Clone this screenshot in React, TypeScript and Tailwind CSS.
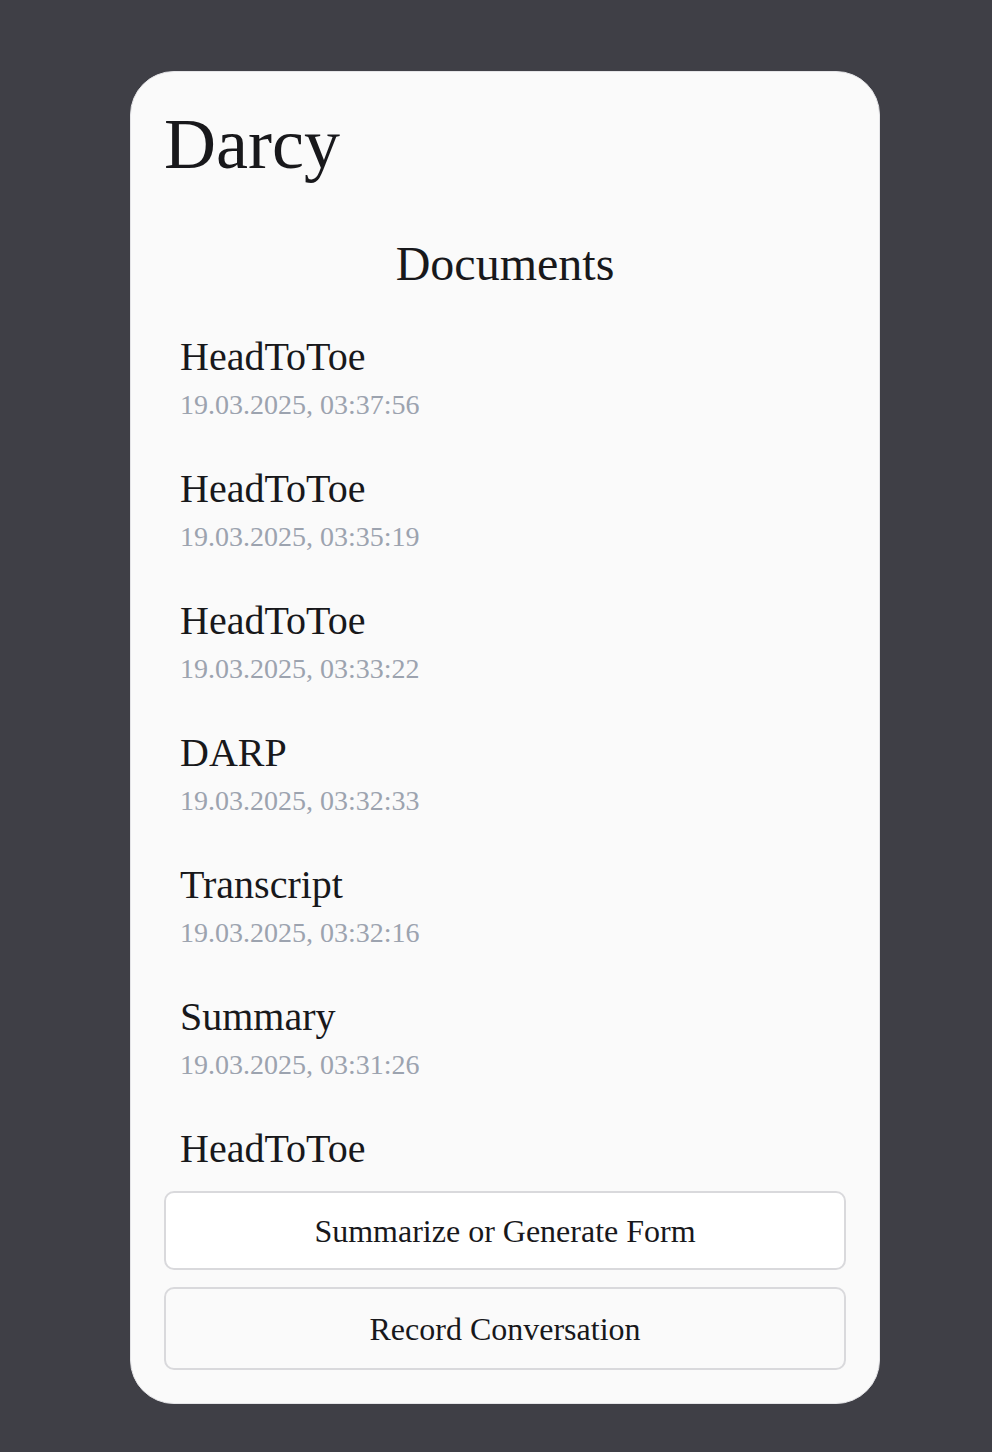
export default function App() {
  const docs = [
    { title: "HeadToToe", date: "19.03.2025, 03:37:56" },
    { title: "HeadToToe", date: "19.03.2025, 03:35:19" },
    { title: "HeadToToe", date: "19.03.2025, 03:33:22" },
    { title: "DARP", date: "19.03.2025, 03:32:33" },
    { title: "Transcript", date: "19.03.2025, 03:32:16" },
    { title: "Summary", date: "19.03.2025, 03:31:26" },
    { title: "HeadToToe", date: "19.03.2025, 03:30:02" },
  ]

  return (
    <div className="min-h-screen bg-[#3f3f46] pt-[71px] font-['Liberation_Serif',serif] text-[#18181b]">
      <div className="ml-[130px] flex h-[1333px] w-[750px] flex-col rounded-[44px] border border-[#e4e4e7] bg-[#fafafa] px-[33px] pb-[33px]">
        <h1 className="mt-[36px] text-[72px] leading-[72px]">Darcy</h1>

        <h2 className="mt-[60px] text-center text-[48px] leading-[48px]">Documents</h2>

        <div className="flex-1 overflow-hidden pt-[49px]">
          <ul className="flex flex-col gap-[50px] pl-4">
            {docs.map((doc, i) => (
              <li key={i}>
                <div className="text-[40px] leading-[40px]">{doc.title}</div>
                <div className="mt-[14px] text-[28px] leading-[28px] text-[#9ca3af]">{doc.date}</div>
              </li>
            ))}
          </ul>
        </div>

        <div className="mt-4 flex flex-col gap-[17px]">
          <button className="flex h-[79px] items-center justify-center rounded-[10px] border-2 border-[#d9d9dc] bg-white text-[32px]">
            Summarize or Generate Form
          </button>
          <button className="flex h-[83px] items-center justify-center rounded-[10px] border-2 border-[#d9d9dc] bg-[#fafafa] text-[32px]">
            Record Conversation
          </button>
        </div>
      </div>
    </div>
  )
}
